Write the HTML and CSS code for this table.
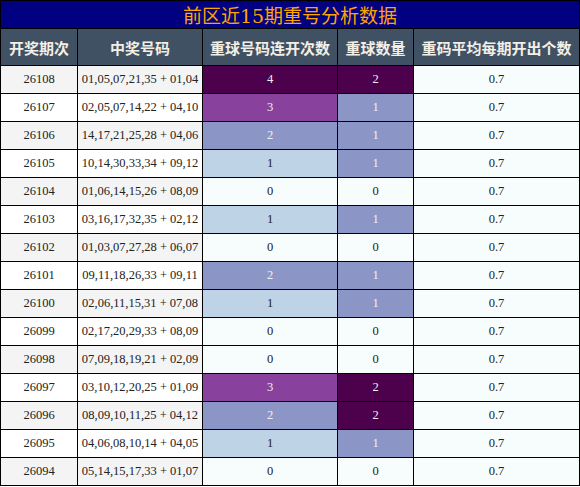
FILE: index.html
```html
<!DOCTYPE html>
<html lang="zh">
<head>
  <meta charset="UTF-8" />
  <title>前区近15期重号分析数据</title>
  <link rel="stylesheet" href="styles.css">
</head>
<body>
  <table class="stats">
    <colgroup>
      <col class="c-issue">
      <col class="c-nums">
      <col class="c-streak">
      <col class="c-count">
      <col class="c-avg">
    </colgroup>
    <thead>
      <tr><th class="title" colspan="5">前区近15期重号分析数据</th></tr>
      <tr class="head">
        <th>开奖期次</th>
        <th>中奖号码</th>
        <th>重球号码连开次数</th>
        <th>重球数量</th>
        <th>重码平均每期开出个数</th>
      </tr>
    </thead>
    <tbody>
      <tr><td>26108</td><td>01,05,07,21,35 + 01,04</td><td class="s4">4</td><td class="s4">2</td><td class="avg">0.7</td></tr>
      <tr><td>26107</td><td>02,05,07,14,22 + 04,10</td><td class="s3">3</td><td class="s2">1</td><td class="avg">0.7</td></tr>
      <tr><td>26106</td><td>14,17,21,25,28 + 04,06</td><td class="s2">2</td><td class="s2">1</td><td class="avg">0.7</td></tr>
      <tr><td>26105</td><td>10,14,30,33,34 + 09,12</td><td class="s1">1</td><td class="s2">1</td><td class="avg">0.7</td></tr>
      <tr><td>26104</td><td>01,06,14,15,26 + 08,09</td><td class="s0">0</td><td class="s0">0</td><td class="avg">0.7</td></tr>
      <tr><td>26103</td><td>03,16,17,32,35 + 02,12</td><td class="s1">1</td><td class="s2">1</td><td class="avg">0.7</td></tr>
      <tr><td>26102</td><td>01,03,07,27,28 + 06,07</td><td class="s0">0</td><td class="s0">0</td><td class="avg">0.7</td></tr>
      <tr><td>26101</td><td>09,11,18,26,33 + 09,11</td><td class="s2">2</td><td class="s2">1</td><td class="avg">0.7</td></tr>
      <tr><td>26100</td><td>02,06,11,15,31 + 07,08</td><td class="s1">1</td><td class="s2">1</td><td class="avg">0.7</td></tr>
      <tr><td>26099</td><td>02,17,20,29,33 + 08,09</td><td class="s0">0</td><td class="s0">0</td><td class="avg">0.7</td></tr>
      <tr><td>26098</td><td>07,09,18,19,21 + 02,09</td><td class="s0">0</td><td class="s0">0</td><td class="avg">0.7</td></tr>
      <tr><td>26097</td><td>03,10,12,20,25 + 01,09</td><td class="s3">3</td><td class="s4">2</td><td class="avg">0.7</td></tr>
      <tr><td>26096</td><td>08,09,10,11,25 + 04,12</td><td class="s2">2</td><td class="s4">2</td><td class="avg">0.7</td></tr>
      <tr><td>26095</td><td>04,06,08,10,14 + 04,05</td><td class="s1">1</td><td class="s2">1</td><td class="avg">0.7</td></tr>
      <tr><td>26094</td><td>05,14,15,17,33 + 01,07</td><td class="s0">0</td><td class="s0">0</td><td class="avg">0.7</td></tr>
    </tbody>
  </table>
</body>
</html>
```
FILE: styles.css
```css
body {
  margin: 0;
  background: #fff;
  font-family: "Liberation Serif", "Noto Sans CJK SC", serif;
}
.stats {
  width: 580px;
  border-collapse: collapse;
  table-layout: fixed;
  font-size: 12.5px;
  color: #222;
}
.c-issue { width: 77px; }
.c-nums { width: 125px; }
.c-streak { width: 135px; }
.c-count { width: 76px; }
.stats th,
.stats td {
  border: 1px solid #000;
  padding: 0;
  text-align: center;
  white-space: nowrap;
}
.title {
  height: 27px;
  background: #000080;
  color: #ffa500;
  font-family: "DejaVu Serif", "Noto Sans CJK SC", serif;
  font-size: 19px;
  font-weight: normal;
}
.head th {
  height: 36px;
  background: #415164;
  color: #f2efe6;
  font-family: "Noto Sans CJK SC", sans-serif;
  font-size: 15px;
  font-weight: bold;
}
.stats td {
  height: 27px;
}
tbody tr:nth-child(odd) td {
  background: #f4f4f4;
}
tbody tr:nth-child(even) td {
  background: #fff;
}
.stats td.avg { background: #f7fcfd; }
.stats td.s0 { background: #f7fcfd; color: #222; }
.stats td.s1 { background: #bfd3e6; color: #222; }
.stats td.s2 { background: #8c96c6; color: #f1f1f1; }
.stats td.s3 { background: #88419d; color: #f1f1f1; }
.stats td.s4 { background: #4d004b; color: #f1f1f1; }
```
